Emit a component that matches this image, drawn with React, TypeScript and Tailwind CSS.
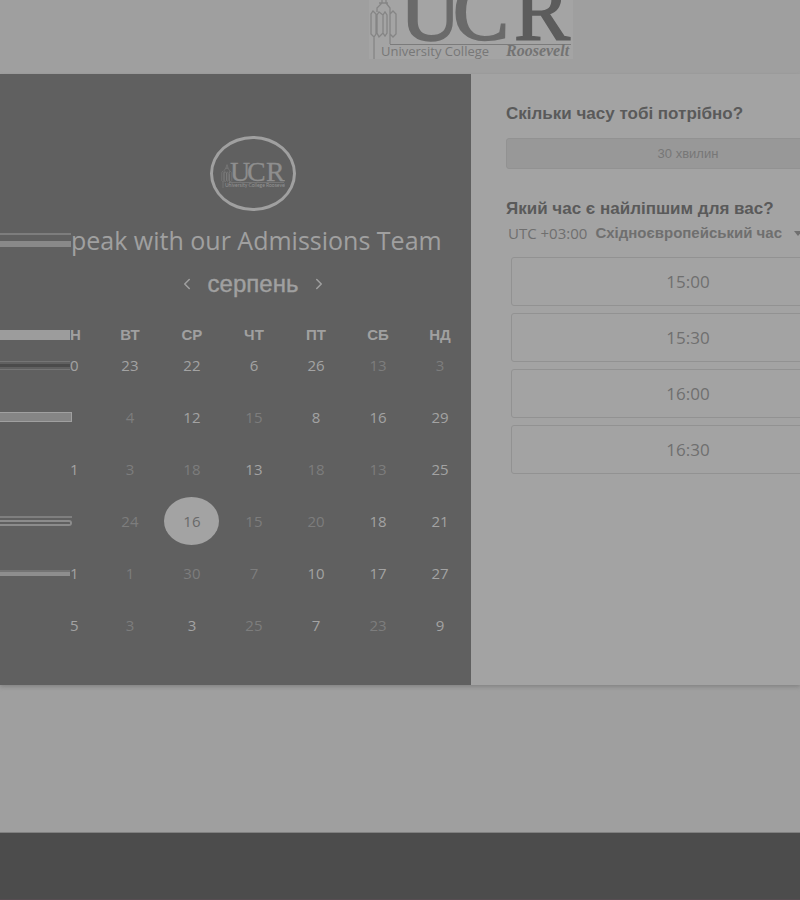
import type { ReactNode } from "react";
import { ChevronLeft, ChevronRight } from "lucide-react";

type Day = { n: string; on?: boolean; selected?: boolean };

const a = (n: string): Day => ({ n, on: true });
const d = (n: string): Day => ({ n });

const weekdays = ["ВТ", "СР", "ЧТ", "ПТ", "СБ", "НД"];

const weeks: Day[][] = [
  [a("0"), a("23"), a("22"), a("6"), a("26"), d("13"), d("3")],
  [a(""), d("4"), a("12"), d("15"), a("8"), a("16"), a("29")],
  [a("1"), d("3"), d("18"), a("13"), d("18"), d("13"), a("25")],
  [a(""), d("24"), { n: "16", selected: true }, d("15"), d("20"), a("18"), a("21")],
  [a("1"), d("1"), d("30"), d("7"), a("10"), a("17"), a("27")],
  [a("5"), d("3"), a("3"), d("25"), a("7"), d("23"), a("9")],
];

const streaks: ReactNode[] = [
  <div className="h-[9px] w-[70px] border-y border-[#757575] py-[2px]">
    <div className="h-[3px] bg-[#4b4b4b]" />
  </div>,
  <div className="h-[10px] w-[72px] border-y border-r border-[#a0a0a0] bg-[#858585]" />,
  <div className="w-[70px]" />,
  <div className="w-[72px]">
    <div className="h-[2px] bg-[#7f7f7f]" />
    <div className="mt-[2px] h-[6px] rounded-r-full border-y-2 border-r-2 border-[#8c8c8c]" />
  </div>,
  <div className="w-[70px]">
    <div className="h-[2px] bg-[#747474]" />
    <div className="h-[4px] bg-[#8e8e8e]" />
  </div>,
  <div className="w-[70px]" />,
];

const slots = ["15:00", "15:30", "16:00", "16:30"];

function Towers() {
  return (
    <g fill="none" strokeWidth="1.3">
      <path d="M5 59V37M21 44V18M2 34V14l2-3 3 3v20l-2 3zM8 33V15l2-3 4 3v18l-4 4zM14 33V15l2-3 2 3v18l-2 3zM21 34V14l3-3 3 3v20l-3 3zM8 12V8l5-5V0l2-6 2 6v3l4 5v6M10 3h9" />
    </g>
  );
}

function HeaderLogo() {
  return (
    <svg
      viewBox="0 0 204 60"
      className="h-[60px] w-[204px] shrink-0"
      role="img"
      aria-label="University College Roosevelt"
    >
      <rect width="204" height="59" fill="#a4a4a4" />
      <g stroke="#858585">
        <Towers />
      </g>
      <g fill="#6a6a6a" fontFamily="'Liberation Serif', serif" fontSize="84">
        <text x="31" y="40" stroke="#6a6a6a" strokeWidth="2">U</text>
        <text x="84" y="40" stroke="#6a6a6a" strokeWidth="2">C</text>
        <text x="145" y="40" fill="#5c5c5c" stroke="#5c5c5c" strokeWidth="1.5">R</text>
      </g>
      <path d="M21 44.500H202" stroke="#7b7b7b" />
      <text x="12" y="56" fill="#777777" fontFamily="'Open Sans', sans-serif" fontSize="13">
        University College
      </text>
      <text
        x="137"
        y="56"
        fill="#737373"
        fontFamily="'Liberation Serif', serif"
        fontSize="16"
        fontStyle="italic"
        fontWeight="700"
      >
        Roosevelt
      </text>
    </svg>
  );
}

function Avatar() {
  return (
    <div className="flex h-[75px] w-[86px] items-center justify-center rounded-[50%] border-3 border-[#a0a0a0]">
      <svg viewBox="0 0 64 28" className="h-[28px] w-[64px] shrink-0" role="img" aria-label="UCR">
        <g stroke="#858585" transform="translate(0 7) scale(0.400)">
          <Towers />
        </g>
        <g fill="#8e8e8e" stroke="#8e8e8e" strokeWidth="0.3" fontFamily="'Liberation Serif', serif" fontSize="28">
          <text x="9" y="21">U</text>
          <text x="26" y="21">C</text>
          <text x="45" y="21">R</text>
        </g>
        <path d="M8 22.500H63" stroke="#858585" strokeWidth="0.6" />
        <text x="4" y="27" fill="#949494" fontFamily="Lato, sans-serif" fontSize="5">
          University College Roosevelt
        </text>
      </svg>
    </div>
  );
}

function DayCell({ day }: { day: Day }) {
  if (day.selected) {
    return (
      <button
        type="button"
        aria-pressed="true"
        className="mx-auto block h-[48px] w-[55px] rounded-[50%] bg-[#a3a3a3] text-[#696969]"
      >
        {day.n}
      </button>
    );
  }
  return (
    <button
      type="button"
      disabled={!day.on}
      className={day.on ? "font-medium text-[#a3a3a3]" : "text-[#7d7d7d]"}
    >
      {day.n}
    </button>
  );
}

function Calendar() {
  return (
    <section className="flex flex-col bg-[#606060] pt-[62px] text-[#a0a0a0]">
      <div className="flex justify-center pl-[35px]">
        <Avatar />
      </div>
      <div className="mt-[13px] flex h-8 items-center">
        <div className="h-[14px] w-[71px] shrink-0">
          <div className="h-[2px] bg-[#7d7d7d]" />
          <div className="mt-[6px] h-[6px] bg-[#898989]" />
        </div>
        <h1 className="whitespace-nowrap font-['Open_Sans',sans-serif] text-[25px] leading-7">
          peak with our Admissions Team
        </h1>
      </div>
      <div className="mt-3 flex h-8 items-center justify-center gap-3 pl-[35px]">
        <button type="button" aria-label="Попередній місяць">
          <ChevronLeft size={18} />
        </button>
        <h2 className="font-['Liberation_Sans',sans-serif] text-[24px] leading-8 [-webkit-text-stroke:0.4px_#a0a0a0]">
          серпень
        </h2>
        <button type="button" aria-label="Наступний місяць">
          <ChevronRight size={18} />
        </button>
      </div>
      <table className="mt-[31px] w-full table-fixed border-collapse font-['Open_Sans',sans-serif] text-[15px]">
        <colgroup>
          <col className="w-[21%]" />
        </colgroup>
        <thead className="font-['Liberation_Sans',sans-serif] leading-2">
          <tr className="h-2">
            <th className="p-0">
              <div className="flex h-2 items-center">
                <div className="h-[10px] w-[70px] bg-[#9c9c9c]" />Н
              </div>
            </th>
            {weekdays.map((w) => (
              <th key={w} className="p-0">{w}</th>
            ))}
          </tr>
        </thead>
        <tbody className="leading-4">
          {weeks.map((week, i) => (
            <tr key={i} className="h-[52px]">
              {week.map((day, j) => (
                <td key={j} className="p-0 text-center">
                  {j === 0 ? (
                    <div className="flex items-center">
                      {streaks[i]}
                      {day.n && <DayCell day={day} />}
                    </div>
                  ) : (
                    <DayCell day={day} />
                  )}
                </td>
              ))}
            </tr>
          ))}
        </tbody>
      </table>
      <div className="h-[34px]" />
    </section>
  );
}

function Scheduling() {
  return (
    <section className="min-w-0 overflow-hidden bg-[#a3a3a3] pl-[35px] pt-[28px] text-[#6f6f6f]">
      <div className="w-[364px]">
        <h2 className="font-['Liberation_Sans',sans-serif] text-[17px] font-bold leading-6 text-[#5a5a5a]">
          Скільки часу тобі потрібно?
        </h2>
        <button
          type="button"
          className="mt-3 block h-[31px] w-full rounded-[3px] border border-[#929292] bg-[#989898] font-['Liberation_Sans',sans-serif] text-[13px] text-[#777777]"
        >
          30 хвилин
        </button>
        <h2 className="mt-7 font-['Liberation_Sans',sans-serif] text-[17px] font-bold leading-6 text-[#5a5a5a]">
          Який час є найліпшим для вас?
        </h2>
        <div className="flex h-6 items-center gap-2 whitespace-nowrap pl-[2px]">
          <label htmlFor="zone" className="font-['Open_Sans',sans-serif] text-[15px]">UTC +03:00</label>
          <select
            id="zone"
            className="appearance-none bg-transparent font-['Liberation_Sans',sans-serif] text-[15px] font-bold"
          >
            <option>Східноєвропейський час</option>
          </select>
          <svg viewBox="0 0 8 5" className="ml-1 h-[5px] w-2 shrink-0" aria-hidden="true">
            <path d="M0 0h8L4 5z" fill="currentColor" />
          </svg>
        </div>
        <ul className="mt-3 flex flex-col gap-[7px] px-[5px]">
          {slots.map((s) => (
            <li key={s}>
              <button
                type="button"
                className="block h-[49px] w-full rounded-[3px] border border-[#929292] font-['Open_Sans',sans-serif] text-[17px]"
              >
                {s}
              </button>
            </li>
          ))}
        </ul>
      </div>
    </section>
  );
}

export default function App() {
  return (
    <div className="flex min-h-screen flex-col overflow-hidden bg-[#9f9f9f] font-[Lato,sans-serif]">
      <header className="flex h-[74px] items-start justify-center pl-[142px]">
        <HeaderLogo />
      </header>
      <main className="grid grid-cols-[471fr_329fr] shadow-[0_2px_4px_#858585]">
        <Calendar />
        <Scheduling />
      </main>
      <div className="h-[147px]" />
      <footer className="grow border-b border-t border-b-[#574d52] border-t-[#808080] bg-[#4c4c4c]" />
    </div>
  );
}
